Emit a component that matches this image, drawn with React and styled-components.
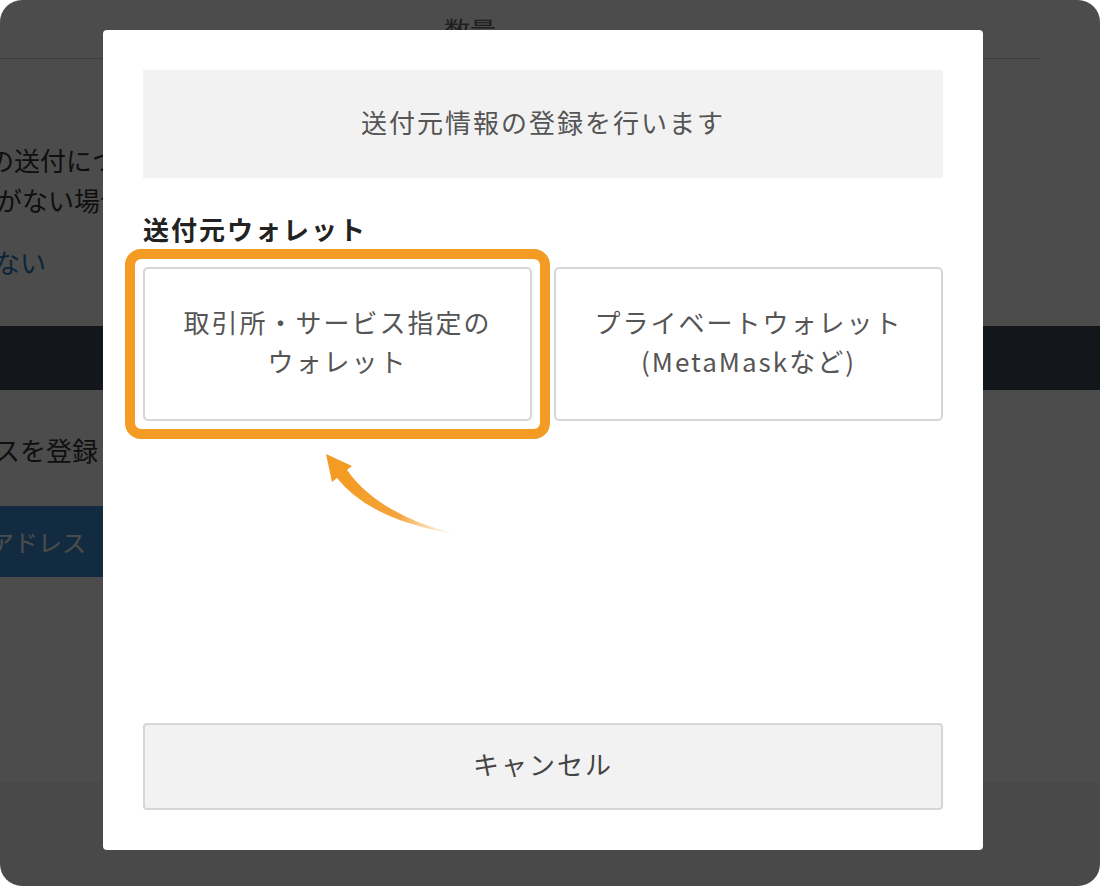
import React from 'react';
import styled, { createGlobalStyle } from 'styled-components';

const GlobalStyle = createGlobalStyle`
  html, body {
    margin: 0;
    padding: 0;
    background: #fff;
  }
  body {
    font-family: "Noto Sans CJK JP", "Noto Sans", sans-serif;
  }
`;

const Frame = styled.div`
  position: relative;
  width: 1100px;
  height: 886px;
  border-radius: 22px;
  overflow: hidden;
  background: #fff;
`;

// the page behind the dialog
const Page = styled.div`
  display: flex;
  flex-direction: column;
  height: 100%;
  font-size: 26px;
  color: #333;
`;

const TableHead = styled.div`
  width: 1041px;
  height: 59px;
  box-sizing: border-box;
  border-bottom: 1px solid #ccc;
  display: flex;
  align-items: center;
  padding-left: 444px;
  color: #666;
`;

const TextLine = styled.div`
  margin-top: ${p => p.gap || 0}px;
  line-height: 40px;
  white-space: nowrap;
  text-indent: ${p => p.indent || 0}px;
  color: ${p => (p.link ? '#2b7bc0' : '#333')};
`;

const DarkBand = styled.div`
  margin-top: 44px;
  height: 64px;
  background: #414b58;
`;

const BlueButton = styled.div`
  margin-top: 36px;
  margin-left: -40px;
  width: 400px;
  height: 71px;
  padding-left: 30px;
  box-sizing: border-box;
  display: flex;
  align-items: center;
  background: #3f8fd5;
  color: #fff;
  font-size: 24px;
`;

const PageFooter = styled.div`
  margin-top: auto;
  height: 104px;
  background: #f4f6f9;
`;

const Overlay = styled.div`
  position: absolute;
  inset: 0;
  background: rgba(0, 0, 0, 0.7);
  display: flex;
  align-items: flex-start;
`;

const Modal = styled.div`
  position: relative;
  width: 880px;
  height: 820px;
  margin: 30px 0 0 103px;
  padding: 40px;
  box-sizing: border-box;
  background: #fff;
  border-radius: 4px;
  display: flex;
  flex-direction: column;
  letter-spacing: 2px;
`;

const Notice = styled.div`
  height: 108px;
  padding-bottom: 6px;
  box-sizing: border-box;
  background: #f2f2f2;
  display: flex;
  align-items: center;
  justify-content: center;
  font-size: 26px;
  color: #555;
`;

const Label = styled.div`
  margin-top: 33px;
  font-size: 26px;
  font-weight: 700;
  line-height: 36px;
  color: #222;
`;

const Choices = styled.div`
  margin-top: 20px;
  display: grid;
  grid-template-columns: 1fr 1fr;
  gap: 22px;
`;

const Choice = styled.div`
  position: relative;
  height: 154px;
  padding-bottom: 7px;
  box-sizing: border-box;
  border: 2px solid #d6d6d6;
  border-radius: 5px;
  display: flex;
  align-items: center;
  justify-content: center;
  text-align: center;
  font-size: 26px;
  line-height: 39px;
  color: #555;
`;

const Highlight = styled.span`
  position: absolute;
  inset: -20px;
  border: 10px solid #f39b22;
  border-radius: 16px;
  pointer-events: none;
`;

const ArrowMark = styled.svg`
  position: absolute;
  left: 215px;
  top: 418px;
`;

const Cancel = styled.button`
  margin-top: auto;
  height: 87px;
  padding: 0 0 6px;
  border: 2px solid #d6d6d6;
  border-radius: 4px;
  background: #f2f2f2;
  font-family: "Noto Sans CJK JP", sans-serif;
  font-size: 26px;
  letter-spacing: 2px;
  color: #444;
`;

function Arrow() {
  return (
    <ArrowMark width="145" height="92" viewBox="0 0 145 92">
      <defs>
        <linearGradient id="arrowFade" x1="20" y1="25" x2="140" y2="88" gradientUnits="userSpaceOnUse">
          <stop offset="0" stopColor="#f39b22" />
          <stop offset="0.55" stopColor="#f4a43a" />
          <stop offset="1" stopColor="#fbd8a8" stopOpacity="0.15" />
        </linearGradient>
      </defs>
      <path d="M8 6 L34 18 L29 22 Q60 66 137 86 Q52 72 19 30 L14 34 Z" fill="url(#arrowFade)" />
    </ArrowMark>
  );
}

export default function App() {
  return (
    <Frame>
      <GlobalStyle />
      <Page>
        <TableHead>数量</TableHead>
        <TextLine gap={81} indent={-38}>への送付についてご確認ください</TextLine>
        <TextLine indent={-4}>がない場合は登録してください</TextLine>
        <TextLine gap={22} indent={-6} link>ない</TextLine>
        <DarkBand />
        <TextLine gap={40} indent={-6}>スを登録してください</TextLine>
        <BlueButton>アドレス</BlueButton>
        <PageFooter />
      </Page>
      <Overlay>
        <Modal>
          <Notice>送付元情報の登録を行います</Notice>
          <Label>送付元ウォレット</Label>
          <Choices>
            <Choice>
              取引所・サービス指定の<br />ウォレット
              <Highlight />
            </Choice>
            <Choice>
              プライベートウォレット<br />(MetaMaskなど)
            </Choice>
          </Choices>
          <Arrow />
          <Cancel>キャンセル</Cancel>
        </Modal>
      </Overlay>
    </Frame>
  );
}
